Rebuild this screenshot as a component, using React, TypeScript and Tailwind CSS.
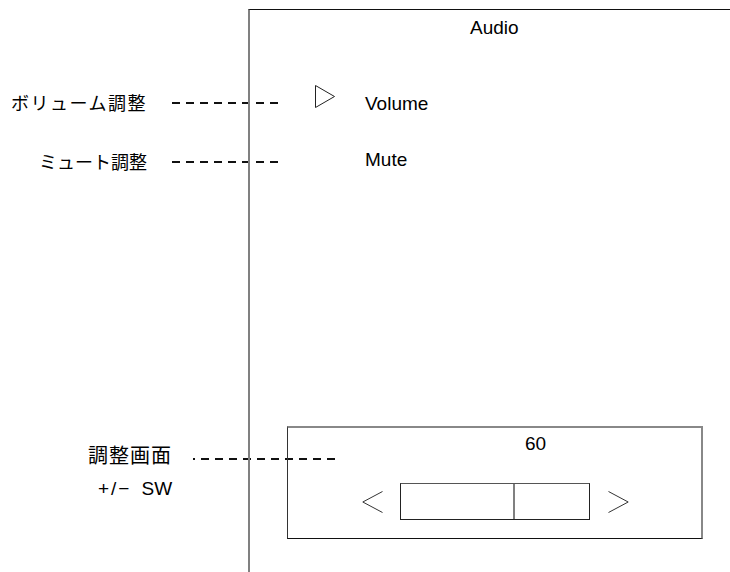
import React from "react";

const jp = "font-['Noto_Sans_CJK_JP',sans-serif]";
const lat = "font-['Liberation_Sans','Noto_Sans_CJK_JP',sans-serif]";

function Dash({ width, offset = 0 }: { width: number; offset?: number }) {
  return (
    <svg width={width} height={2} className="block shrink-0 overflow-visible">
      <line
        x1={0}
        y1={1}
        x2={width}
        y2={1}
        stroke="#111"
        strokeWidth={2}
        strokeDasharray="8 6"
        strokeDashoffset={offset}
      />
    </svg>
  );
}

function Chevron({ dir }: { dir: "left" | "right" }) {
  const pts = dir === "left" ? "20.5,0.5 0.8,11 20.5,21.5" : "0.5,0.5 20.2,11 0.5,21.5";
  return (
    <svg width={21} height={22} className="block shrink-0">
      <polyline points={pts} fill="none" stroke="#333" strokeWidth={1} />
    </svg>
  );
}

export default function App() {
  return (
    <div className="flex w-[730px] h-[572px] bg-white overflow-hidden text-black">
      {/* annotation column */}
      <div className="w-[248px] shrink-0 flex flex-col">
        <div className="mt-[91px] h-[24px] flex items-center">
          <div className="w-[172px] shrink-0 pl-[11px]">
            <span className={`${jp} font-normal text-[18px] leading-[24px] tracking-[1.5px] whitespace-nowrap`}>ボリューム調整</span>
          </div>
          <Dash width={106} />
        </div>
        <div className="mt-[35px] h-[24px] flex items-center">
          <div className="w-[172px] shrink-0 pl-[39px]">
            <span className={`${jp} font-normal text-[18px] leading-[24px] whitespace-nowrap`}>ミュート調整</span>
          </div>
          <Dash width={106} />
        </div>
        <div className="mt-[267px] h-[28px] flex items-start">
          <div className="w-[193px] shrink-0 pl-[88px]">
            <span className={`${jp} font-normal text-[20px] leading-[28px] tracking-[1px] whitespace-nowrap`}>調整画面</span>
          </div>
          <div className="mt-[17px]">
            <Dash width={142} offset={6} />
          </div>
        </div>
        <div className={`mt-[9px] pl-[98px] ${lat} text-[19px] leading-[22px] whitespace-pre`}>
          <span className="tracking-[2px]">+/−</span>
          <span className="ml-[10px]">SW</span>
        </div>
      </div>

      {/* screen panel */}
      <div className="flex-1 mt-[9px] border-t border-t-[#111] border-l-2 border-l-[#808080] flex flex-col">
        <div className={`mt-[7px] pl-[220px] ${lat} text-[19px] leading-[22px]`}>Audio</div>

        <div className="mt-[54px] h-[22px] flex items-start">
          <svg width={21} height={24} className="block shrink-0 ml-[65px] mt-[-8px]">
            <polygon points="0.5,0.5 19.5,11.5 0.5,22.5" fill="none" stroke="#222" strokeWidth={1} />
          </svg>
          <span className={`ml-[29px] ${lat} text-[19px] leading-[22px]`}>Volume</span>
        </div>

        <div className={`mt-[34px] pl-[115px] ${lat} text-[19px] leading-[22px]`}>Mute</div>

        <div className="mt-[255px] ml-[37px] w-[416px] h-[113px] border-t-2 border-r-2 border-t-[#888] border-r-[#888] border-b border-l border-b-[#111] border-l-[#333] flex flex-col">
          <div className={`mt-[5px] pl-[237px] ${lat} text-[19px] leading-[22px]`}>60</div>
          <div className="mt-[28px] flex items-center">
            <div className="ml-[74px]">
              <Chevron dir="left" />
            </div>
            <div className="ml-[17px] w-[190px] h-[37px] border border-[#222] border-t-[#555] flex">
              <div className="w-[112px] h-full" />
              <div className="w-[2px] h-full bg-[#808080]" />
            </div>
            <div className="ml-[18px]">
              <Chevron dir="right" />
            </div>
          </div>
        </div>
      </div>
    </div>
  );
}
